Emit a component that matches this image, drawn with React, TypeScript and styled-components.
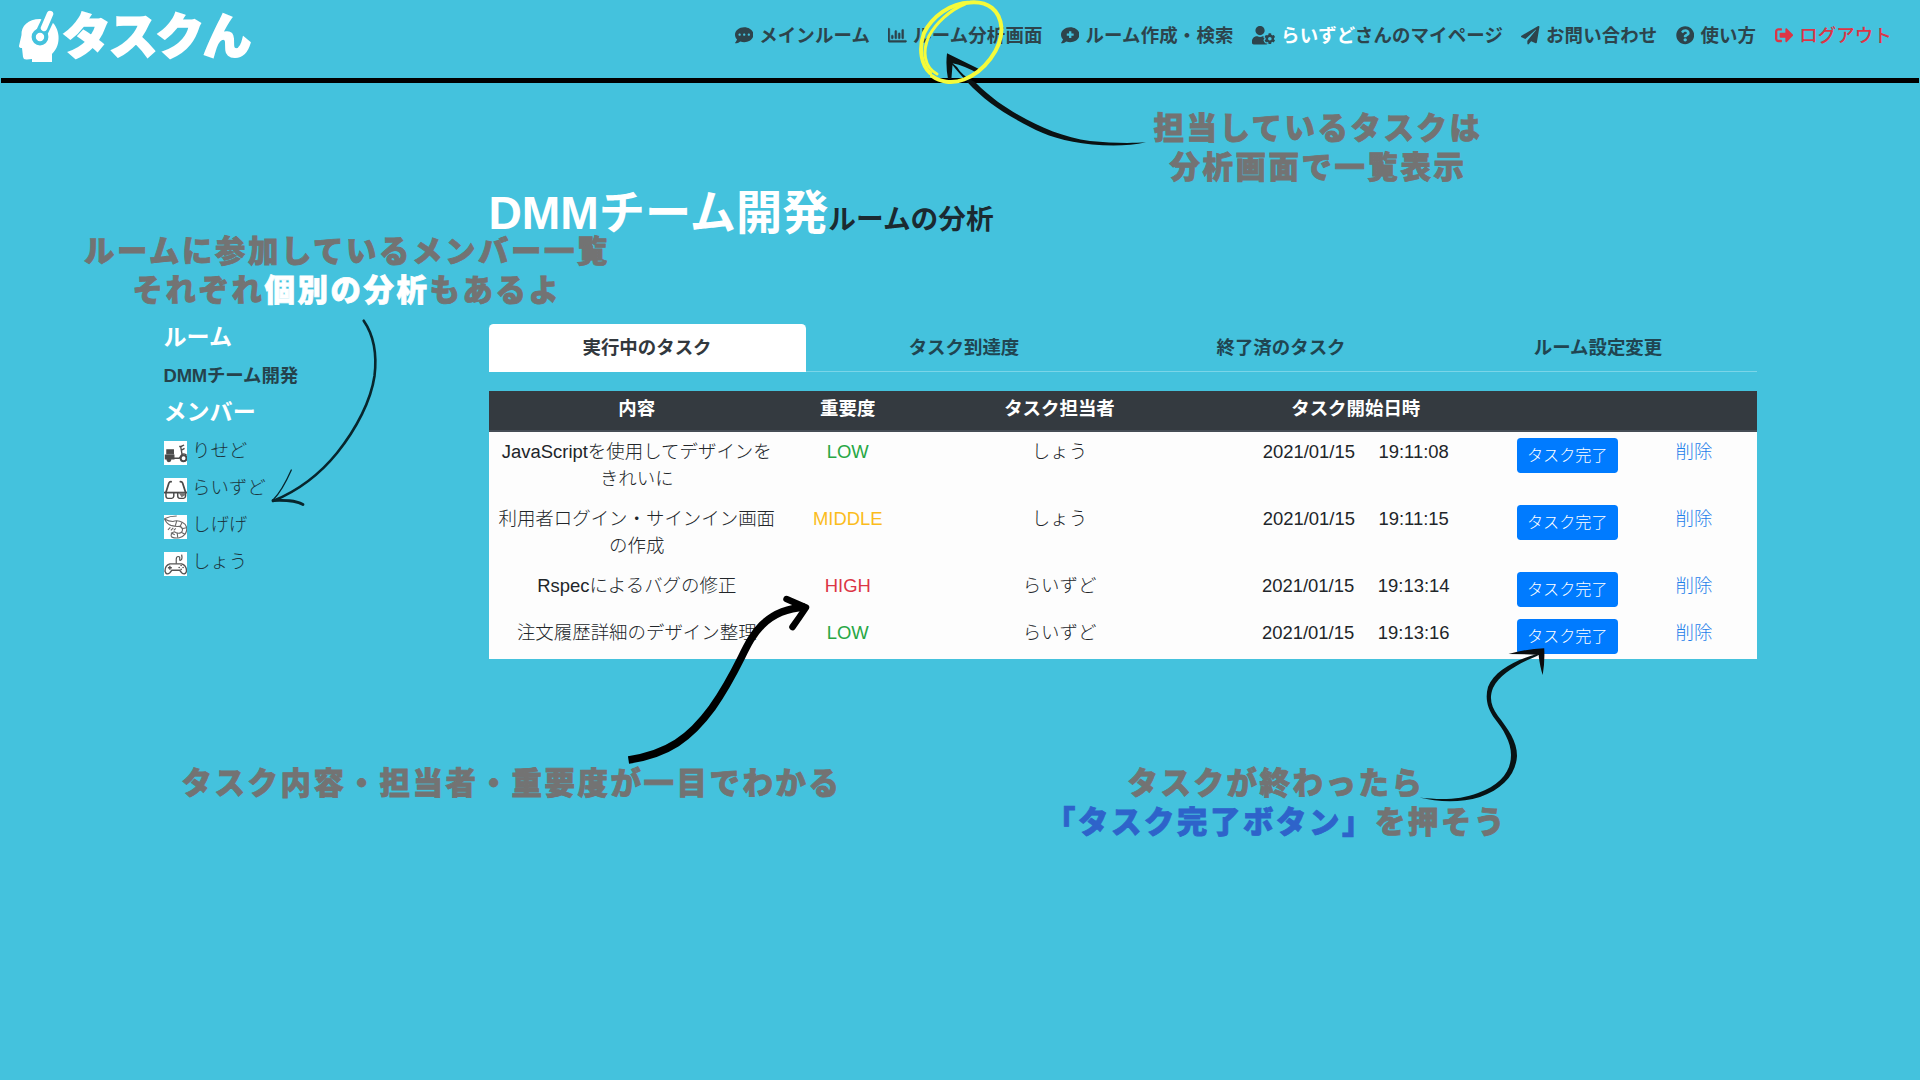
import React from "react";
import styled, { createGlobalStyle } from "styled-components";
import {
  FaCommentDots,
  FaRegChartBar,
  FaCommentMedical,
  FaUserCog,
  FaPaperPlane,
  FaQuestionCircle,
  FaSignOutAlt,
} from "react-icons/fa";

const GlobalStyle = createGlobalStyle`
  *, *::before, *::after { box-sizing: border-box; }
  body {
    margin: 0;
    background: #44c2dd;
    overflow: hidden;
    color: #212529;
    font-family: "Liberation Sans", "Noto Sans CJK JP", sans-serif;
    font-size: 18.45px;
    line-height: 27.7px;
  }
`;

const Page = styled.div`
  position: relative;
  width: 1920px;
  height: 1080px;
  overflow: hidden;
  background: #44c2dd;
`;

const Header = styled.header`
  display: flex;
  justify-content: space-between;
  height: 83px;
  margin: 0 1px;
  border-bottom: 5px solid #000;
`;

const Brand = styled.div`
  display: flex;
  align-items: flex-start;
  padding-left: 17px;
  color: #fff;
`;

const BrandMark = styled.svg`
  width: 42px;
  height: 54px;
  margin-top: 10px;
`;

const BrandName = styled.span`
  margin: 6.5px 0 0 2px;
  font-size: 49px;
  line-height: 60px;
  font-weight: 900;
  letter-spacing: -2.2px;
  -webkit-text-stroke: 1.6px #fff;
`;

const Nav = styled.nav`
  display: flex;
  align-items: center;
  gap: 18.4px;
  height: 71px;
  padding-right: 27px;
`;

const NavLink = styled.a<{ $danger?: boolean; $iconWidth?: number }>`
  display: flex;
  align-items: center;
  gap: 6.2px;
  font-weight: ${(p) => (p.$danger ? 500 : 700)};
  letter-spacing: 0.13px;
  white-space: nowrap;
  color: ${(p) => (p.$danger ? "#dc3545" : "#2d444c")};
  svg {
    flex: none;
    height: 18.45px;
    width: ${(p) => p.$iconWidth ?? 18.45}px;
  }
`;

const ChartIcon = styled(FaRegChartBar)`
  stroke: currentColor;
  stroke-width: 16px;
`;

const UserName = styled.span`
  color: #fff;
`;

const Main = styled.main`
  display: flex;
  padding-left: 163.5px;
`;

const Sidebar = styled.aside`
  display: flex;
  flex-direction: column;
  width: 325px;
  padding-top: 240px;
`;

const SideHeading = styled.h5`
  margin: 0;
  color: #fff;
  font-size: 23.06px;
  line-height: 28px;
  font-weight: 700;
`;

const RoomName = styled.div`
  margin: 11px 0 8px;
  font-weight: 700;
  letter-spacing: -0.15px;
  color: #25424c;
`;

const Members = styled.ul`
  display: flex;
  flex-direction: column;
  gap: 9.3px;
  margin: 11px 0 0;
  padding: 0;
  list-style: none;
`;

const Member = styled.li`
  display: flex;
  align-items: flex-end;
  gap: 5px;
  font-weight: 300;
  color: #1c3640;
`;

const Avatar = styled.svg`
  width: 23.5px;
  height: 23.7px;
  margin-bottom: -0.5px;
  background: #fff;
`;

const MemberName = styled.span`
  line-height: 27.7px;
`;

const Content = styled.section`
  width: 1268px;
  padding-top: 102.5px;
`;

const Title = styled.h1`
  margin: 0 0 78px;
  height: 60px;
  font-size: 46.2px;
  line-height: 55px;
  font-weight: 700;
  color: #fff;
`;

const TitleSuffix = styled.span`
  font-size: 27.7px;
  font-weight: 700;
  color: #1b2a31;
`;

const Tabs = styled.div`
  display: flex;
  height: 48.6px;
  border-bottom: 1.2px solid #7ad5e8;
`;

const Tab = styled.div<{ $active?: boolean }>`
  flex: 1;
  display: flex;
  align-items: center;
  justify-content: center;
  height: 48px;
  border-radius: 4.6px 4.6px 0 0;
  font-weight: 700;
  background: ${(p) => (p.$active ? "#fff" : "transparent")};
  color: ${(p) => (p.$active ? "#32383d" : "#204551")};
`;

const Table = styled.table`
  width: 1268px;
  margin-top: 18.5px;
  border-collapse: separate;
  border-spacing: 0;
  table-layout: fixed;
  text-align: center;
  background: #fdfdfd;
`;

const Col = styled.col<{ $w: number }>`
  width: ${(p) => p.$w}px;
`;

const HeadRow = styled.tr`
  background: #343a40;
`;

const Th = styled.th`
  height: 41px;
  padding: 0 5.5px 3px;
  color: #fff;
  font-weight: 700;
  border-bottom: 2px solid #454d55;
`;

const Td = styled.td<{ $h: number }>`
  height: ${(p) => p.$h}px;
  padding: 6px 5.5px 0;
  vertical-align: top;
  font-weight: 300;
  white-space: pre-line;
  line-height: 27.4px;
`;

const levelColors = { LOW: "#28a745", MIDDLE: "#fbbc1c", HIGH: "#dc3545" };

const Level = styled.span<{ $level: keyof typeof levelColors }>`
  color: ${(p) => levelColors[p.$level]};
`;

const Stamp = styled.div`
  display: flex;
  justify-content: center;
  gap: 23.5px;
`;

const DoneButton = styled.button`
  display: block;
  width: 101px;
  height: 35px;
  margin: 0 auto;
  padding: 0;
  border: 0;
  border-radius: 3.7px;
  background: #007bff;
  color: #fff;
  font: 300 16.14px/34px "Liberation Sans", "Noto Sans CJK JP", sans-serif;
`;

const DeleteLink = styled.a`
  color: #1f80ea;
`;

const Note = styled.p<{ $x: number; $y: number }>`
  position: absolute;
  left: ${(p) => p.$x}px;
  top: ${(p) => p.$y}px;
  width: 720px;
  margin: 0 0 0 -360px;
  text-align: center;
  white-space: pre;
  font-family: "Noto Sans CJK JP", sans-serif;
  font-size: 30.4px;
  line-height: 39.2px;
  font-weight: 900;
  letter-spacing: 2.6px;
  color: #737373;
  -webkit-text-stroke: 0.8px currentColor;
`;

const Tint = styled.span<{ $color: string }>`
  color: ${(p) => p.$color};
`;

const Sketches = styled.svg`
  position: absolute;
  inset: 0;
  width: 1920px;
  height: 1080px;
  pointer-events: none;
`;

const Scooter = () => (
  <Avatar viewBox="0 0 24 24" fill="none" stroke="#4a4a4a" strokeWidth="1.4">
    <path d="M3 9h6.500v4h-6.500z" fill="#4a4a4a" />
    <path d="M1.500 14.500h8.500v3.500h-8.500z" fill="#4a4a4a" />
    <path d="M9.500 17.500h6l3-3.500-1.500-8.500M15.500 5.500h2l3-1.500M17.500 9.500l3.500-2M17.500 14.500c1.500-2 4-2 5.500 0" />
    <circle cx="5" cy="19" r="1.800" fill="#4a4a4a" />
    <circle cx="20" cy="17.500" r="3" strokeWidth="2" />
  </Avatar>
);

const Glasses = () => (
  <Avatar viewBox="0 0 24 24" fill="none" stroke="#4a4a4a" strokeWidth="1.5">
    <path d="M2 14.500L5 5q.8-1.800 3-1.200M22 14.500L19 5q-.8-1.800-3-1.200" strokeWidth="1.800" />
    <path d="M0 14.800h24" strokeWidth="1.800" />
    <path d="M2 15v3.500q.3 2.200 2 2.200h4q1.700 0 2-2.200V15M14 15v3.500q.3 2.200 2 2.200h4q1.700 0 2-2.200V15" />
    <path d="M15 15h6.500v2.500l-3.500 2z" fill="#777" stroke="none" />
  </Avatar>
);

const Shrimp = () => (
  <Avatar viewBox="0 0 24 24" fill="none" stroke="#666" strokeWidth="1.100">
    <path d="M1 3.500Q6 1 13 1M0.500 4Q3 9 7 10.500q5 1.500 8.500 1c4 .5 4.500 4.500 1.500 6.500-2 1.500-4 .5-6.500-1 -3 1-4 4-2.500 5.500 5 2 11 .5 13.500-3 3-4.500 2-10-2.500-12Q14 4.500 9 6.500 5 6.500 .5 4z" />
    <path d="M13 6l-1.500 5M18.500 7.500l-2 4M23 13l-5 1M21.500 19.500l-4-2M14 23l-.5-5M7 18l4 2" />
    <path d="M4 15l2.500-2.500M7 15.500l2.500-2.500M10 15.500l2-2" />
  </Avatar>
);

const Gamepad = () => (
  <Avatar viewBox="0 0 24 24" fill="none" stroke="#555" strokeWidth="1.400">
    <path d="M12.500 12V7.500q0-3 2-3t1.500 2.500q0 2.500 1.500 1t.5-5.500" strokeWidth="1.200" />
    <path d="M6 12h12q5 1.500 5 7.500-1.500 4.500-5 1.500l-2-2.500H8L6 21q-3.500 3-5-1.500Q1 13.500 6 12z" />
    <path d="M4 16h4M6 14v4" />
    <path d="M17.500 13.700v.01M17.500 17.700v.01M15.500 15.700h.01M19.500 15.700h.01" strokeWidth="1.700" strokeLinecap="round" />
  </Avatar>
);

const members = [
  { name: "りせど", Icon: Scooter },
  { name: "らいずど", Icon: Glasses },
  { name: "しげげ", Icon: Shrimp },
  { name: "しょう", Icon: Gamepad },
];

type Task = {
  body: string;
  level: keyof typeof levelColors;
  owner: string;
  time: string;
  height: number;
};

const tasks: Task[] = [
  { body: "JavaScriptを使用してデザインを\nきれいに", level: "LOW", owner: "しょう", time: "19:11:08", height: 67 },
  { body: "利用者ログイン・サインイン画面\nの作成", level: "MIDDLE", owner: "しょう", time: "19:11:15", height: 67 },
  { body: "Rspecによるバグの修正", level: "HIGH", owner: "らいずど", time: "19:13:14", height: 47 },
  { body: "注文履歴詳細のデザイン整理", level: "LOW", owner: "らいずど", time: "19:13:16", height: 46 },
];

const tabs = ["実行中のタスク", "タスク到達度", "終了済のタスク", "ルーム設定変更"];
const heads = ["内容", "重要度", "タスク担当者", "タスク開始日時", "", ""];
const columns = [296.5, 125.5, 298, 294.5, 128.5, 125];

export default function App() {
  return (
    <Page>
      <GlobalStyle />
      <Header>
        <Brand>
          <BrandMark viewBox="0 0 42 54">
            <path
              fill="#fff"
              d="M22 9C10 9 3 16 3.500 25L1 36q0 2 3 2l1 9q.5 3 4 2.500l5-.5v3h20V44c5-5 7-11 6.500-18-.5-6-3-11-6.500-14z"
            />
            <path d="M24 22L34 1" stroke="#44c2dd" strokeWidth="12" />
            <circle cx="22" cy="27" r="6.300" fill="none" stroke="#44c2dd" strokeWidth="4.200" />
            <path d="M26 18L32 4" stroke="#fff" strokeWidth="6.500" strokeLinecap="round" />
            <circle cx="22" cy="27" r="3.600" fill="#fff" />
          </BrandMark>
          <BrandName>タスクん</BrandName>
        </Brand>
        <Nav>
          <NavLink><FaCommentDots />メインルーム</NavLink>
          <NavLink><ChartIcon />ルーム分析画面</NavLink>
          <NavLink><FaCommentMedical />ルーム作成・検索</NavLink>
          <NavLink $iconWidth={23}>
            <FaUserCog />
            <span><UserName>らいずど</UserName>さんのマイページ</span>
          </NavLink>
          <NavLink><FaPaperPlane />お問い合わせ</NavLink>
          <NavLink><FaQuestionCircle />使い方</NavLink>
          <NavLink $danger><FaSignOutAlt />ログアウト</NavLink>
        </Nav>
      </Header>

      <Main>
        <Sidebar>
          <SideHeading>ルーム</SideHeading>
          <RoomName>DMMチーム開発</RoomName>
          <SideHeading>メンバー</SideHeading>
          <Members>
            {members.map(({ name, Icon }) => (
              <Member key={name}>
                <Icon />
                <MemberName>{name}</MemberName>
              </Member>
            ))}
          </Members>
        </Sidebar>

        <Content>
          <Title>
            DMMチーム開発<TitleSuffix>ルームの分析</TitleSuffix>
          </Title>
          <Tabs>
            {tabs.map((t, i) => (
              <Tab key={t} $active={i === 0}>{t}</Tab>
            ))}
          </Tabs>
          <Table>
            <colgroup>
              {columns.map((w, i) => (
                <Col key={i} $w={w} />
              ))}
            </colgroup>
            <thead>
              <HeadRow>
                {heads.map((h, i) => (
                  <Th key={i}>{h}</Th>
                ))}
              </HeadRow>
            </thead>
            <tbody>
              {tasks.map((t) => (
                <tr key={t.time}>
                  <Td $h={t.height}>{t.body}</Td>
                  <Td $h={t.height}><Level $level={t.level}>{t.level}</Level></Td>
                  <Td $h={t.height}>{t.owner}</Td>
                  <Td $h={t.height}>
                    <Stamp><span>2021/01/15</span><span>{t.time}</span></Stamp>
                  </Td>
                  <Td $h={t.height}><DoneButton>タスク完了</DoneButton></Td>
                  <Td $h={t.height}><DeleteLink>削除</DeleteLink></Td>
                </tr>
              ))}
            </tbody>
          </Table>
        </Content>
      </Main>

      <Note $x={1318} $y={107}>{"担当しているタスクは\n分析画面で一覧表示"}</Note>
      <Note $x={347} $y={230}>
        {"ルームに参加しているメンバー一覧\nそれぞれ"}
        <Tint $color="#fff">個別の分析</Tint>もあるよ
      </Note>
      <Note $x={511.500} $y={762}>タスク内容・担当者・重要度が一目でわかる</Note>
      <Note $x={1276} $y={762}>
        {"タスクが終わったら\n"}
        <Tint $color="#2e63ca">「タスク完了ボタン」</Tint>を押そう
      </Note>

      <Sketches viewBox="0 0 1920 1080" fill="none">
        <path
          fill="#0b1213"
          d="M947 53.300L981 70 977 73Q965 66 952.500 63.300L957 67Q962 76 975 82C992 99 1005 107 1018.600 115 1040 127 1065 138 1090 141 1110 143 1130 143.500 1146 142.300 1130 146 1110 146 1092 144.500 1065 142 1045 135 1030 127 1003 113 985 101 967 81.700Q957 71 952.500 65L951.400 79H948Q945.500 66 947 53.300z"
        />
        <g stroke="#f5fb3a" strokeLinecap="round">
          <path strokeWidth="4" d="M932 76C940 82 952 84 964 79.500 984 72 1002 49 1001.500 28 1000 10 988 1 970 2.500 950 3 932 17 924 33 918 50 922 66 930 73" />
          <path strokeWidth="3" d="M965 4C950 10 936 23 929 36 922 51 924 67 937 74" />
        </g>
        <g stroke="#08262d" strokeLinecap="round">
          <path strokeWidth="2.600" d="M363.700 320.700C375 337 377 355 374.500 376 371 400 357 428 337 453 320 474 300 490 273 501" />
          <path strokeWidth="1.300" d="M273 500C281 492 286 482 291.300 470" />
          <path strokeWidth="2.800" d="M273 500.500C285 500 295 500 303 504.500" />
        </g>
        <path
          stroke="#000"
          strokeWidth="7.500"
          d="M628.500 760C668 754 690 738 712 708 742 665 744 643 762 625 775 612 790 608 805 607"
        />
        <path stroke="#000" strokeWidth="6.500" strokeLinecap="round" strokeLinejoin="round" d="M786.500 599L806 607.500Q799 618 792.500 627" />
        <path
          fill="#081315"
          d="M1419.500 797.500C1440 800 1460 800 1478 793 1500 785 1511 772 1511 755 1511 742 1503 729 1495 719 1487 708 1485 698 1488 687 1494 671 1515 660 1537 654L1538 655.500C1522 662 1500 673 1493 688 1489 698 1491 706 1498 716 1508 729 1517 741 1517 756 1516 774 1503 789 1480 797 1460 803 1438 802 1419.500 797.500z"
        />
        <path fill="#0b0d0e" d="M1508.500 654Q1526 649 1544.200 648.300 1545 662 1542.700 675 1540 667 1538.600 655 1524 654 1508.500 654z" />
      </Sketches>
    </Page>
  );
}
